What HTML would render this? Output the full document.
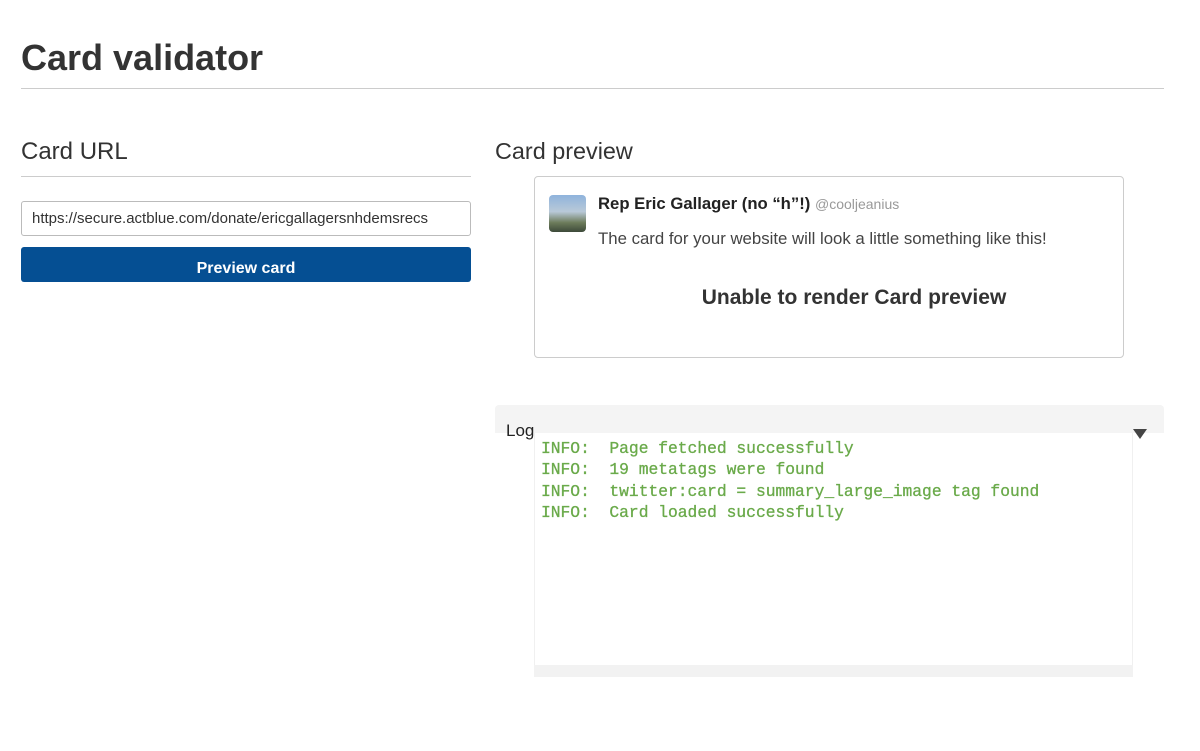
<!DOCTYPE html>
<html><head><style>
body{margin:0;background:#fff;font-family:"Liberation Sans",sans-serif;color:#333;width:1200px;height:751px;overflow:hidden;position:relative}
.a{position:absolute}
</style></head><body>
<div class="a" style="left:21px;top:37px;font-size:36px;font-weight:bold;color:#333">Card validator</div>
<div class="a" style="left:21px;top:88px;width:1143px;height:1px;background:#ccc"></div>
<div class="a" style="left:21px;top:138px;font-size:24px">Card URL</div>
<div class="a" style="left:21px;top:176px;width:450px;height:1px;background:#ccc"></div>
<div class="a" style="left:21px;top:201px;border:1px solid #bbb;border-radius:3px;font-size:15px;line-height:33px;padding-left:10px;box-sizing:border-box;width:450px;height:35px">https://secure.actblue.com/donate/ericgallagersnhdemsrecs</div>
<div class="a" style="left:21px;top:247px;width:450px;height:35px;background:#054f93;border-radius:3px;color:#fff;font-weight:bold;font-size:16px;text-align:center;line-height:44px">Preview card</div>
<div class="a" style="left:495px;top:138px;font-size:23.4px">Card preview</div>
<div class="a" style="left:534px;top:176px;width:588px;height:180px;border:1px solid #ccc;border-radius:4px"></div>
<div class="a" style="left:549px;top:195px;width:37px;height:37px;border-radius:4px;background:linear-gradient(180deg,#8fb3dc 0%,#b9c9d8 45%,#6c7b5a 75%,#3d4a3a 100%)"></div>
<div class="a" style="left:598px;top:194px;font-size:16.7px;font-weight:bold;color:#222">Rep Eric Gallager (no “h”!) <span style="font-weight:normal;font-size:14px;color:#999">@cooljeanius</span></div>
<div class="a" style="left:598px;top:229px;font-size:16.8px;color:#444">The card for your website will look a little something like this!</div>
<div class="a" style="left:534px;top:286px;width:640px;text-align:center;font-size:21px;font-weight:bold;color:#333">Unable to render Card preview</div>
<div class="a" style="left:495px;top:405px;width:669px;height:28px;background:#f4f4f4;border-radius:4px 4px 0 0"></div>
<div class="a" style="left:506px;top:421px;font-size:17px;color:#222">Log</div>
<div class="a" style="left:1133px;top:429px;width:0;height:0;border-left:7px solid transparent;border-right:7px solid transparent;border-top:10px solid #444"></div>
<div class="a" style="left:534px;top:433px;width:599px;height:244px;background:#fff;border-left:1px solid #f0f0f0;border-right:1px solid #f0f0f0;box-sizing:border-box"></div>
<div class="a" style="left:534px;top:665px;width:599px;height:12px;background:#f2f2f2"></div>
<pre class="a" style="left:541px;top:438px;margin:0;font-family:'Liberation Mono',monospace;font-size:16.3px;line-height:21.3px;color:#6aaa4a;-webkit-text-stroke:0.3px #6aaa4a">INFO:  Page fetched successfully
INFO:  19 metatags were found
INFO:  twitter:card = summary_large_image tag found
INFO:  Card loaded successfully</pre>
</body></html>
